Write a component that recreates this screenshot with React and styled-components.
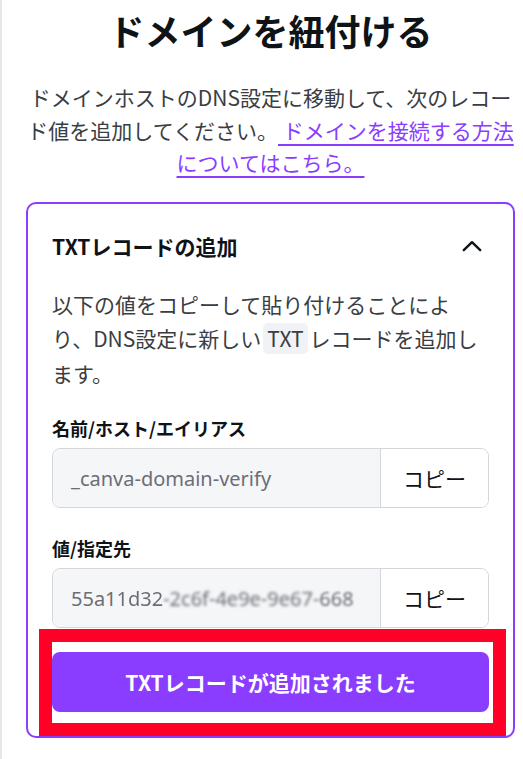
import React from 'react';
import styled, { createGlobalStyle } from 'styled-components';

const GlobalStyle = createGlobalStyle`
  html, body {
    margin: 0;
    padding: 0;
    background: #ffffff;
  }
  body {
    font-family: "Noto Sans CJK JP", "Noto Sans", sans-serif;
    color: #0e1318;
  }
`;

const Page = styled.div`
  min-height: 100vh;
  border-left: 2px solid #e6e6ec;
  box-sizing: border-box;
  padding: 5px 8px 0 24px;
`;

const Column = styled.div`
  width: 489px;
  display: flex;
  flex-direction: column;
  align-items: stretch;
`;

const Title = styled.h1`
  margin: 0;
  font-size: 36px;
  line-height: 50px;
  font-weight: 700;
  text-align: center;
  color: #0e1318;
`;

const Intro = styled.p`
  margin: 26px 0 0;
  font-size: 21px;
  line-height: 32.5px;
  text-align: center;
  color: #3a3d42;
`;

const Link = styled.a`
  color: #8b3dff;
  text-decoration: underline;
  text-underline-offset: 5px;
  text-decoration-thickness: 2px;
`;

const Card = styled.section`
  margin-top: 23px;
  border: 2px solid #8b3dff;
  border-radius: 10px;
  padding: 24px;
  display: flex;
  flex-direction: column;
`;

const CardHeader = styled.div`
  height: 36px;
  display: flex;
  align-items: center;
  justify-content: space-between;
`;

const CardTitle = styled.h2`
  margin: 0;
  font-size: 21px;
  font-weight: 700;
  color: #0e1318;
`;

const Toggle = styled.button`
  width: 36px;
  height: 36px;
  margin-right: -1px;
  padding: 0;
  border: none;
  background: transparent;
  display: flex;
  align-items: center;
  justify-content: center;
  color: #0e1318;
`;

const Desc = styled.p`
  margin: 23px 0 0;
  font-size: 21px;
  line-height: 34.5px;
  color: #3a3d42;
`;

const Code = styled.code`
  display: inline-block;
  font-family: "Noto Sans CJK JP", "Noto Sans", sans-serif;
  line-height: 31px;
  background: #f1f2f5;
  border-radius: 5px;
  padding: 0 4px;
  margin: 0 2px;
`;

const Field = styled.div`
  margin-top: ${(p) => p.$gap}px;
  display: flex;
  flex-direction: column;
`;

const Label = styled.label`
  font-size: 18px;
  line-height: 28px;
  font-weight: 700;
  color: #0e1318;
  margin-bottom: 6px;
`;

const InputGroup = styled.div`
  height: 60px;
  display: flex;
  border: 1px solid #d5d6dc;
  border-radius: 8px;
  overflow: hidden;
  box-sizing: border-box;
`;

const Value = styled.div`
  flex: 1;
  min-width: 0;
  background: #f5f6f8;
  padding: 0 18px;
  display: flex;
  align-items: center;
  font-family: "Noto Sans", sans-serif;
  font-size: 20px;
  color: #6c6e76;
  white-space: nowrap;
  overflow: hidden;
`;

const Blur = styled.span`
  display: inline-block;
  filter: blur(${(p) => p.$r}px);
`;

const CopyButton = styled.button`
  width: 108px;
  flex: none;
  border: none;
  border-left: 1px solid #d5d6dc;
  background: #ffffff;
  font-family: "Noto Sans CJK JP", sans-serif;
  font-size: 21px;
  color: #0e1318;
  padding: 0;
`;

const ActionWrap = styled.div`
  position: relative;
  margin-top: 24px;
`;

const Primary = styled.button`
  width: 100%;
  height: 60px;
  border: none;
  border-radius: 8px;
  background: #8b3dff;
  color: #ffffff;
  font-family: "Noto Sans CJK JP", sans-serif;
  font-size: 21px;
  font-weight: 700;
`;

const Highlight = styled.div`
  position: absolute;
  left: -13px;
  top: -23px;
  right: -17px;
  bottom: -24px;
  border: 13px solid #ff0026;
  pointer-events: none;
`;

function ChevronUp() {
  return (
    <svg width="20" height="12" viewBox="0 0 20 12" fill="none">
      <path d="M1.8 10.2 L10 2.2 L18.2 10.2" stroke="currentColor" strokeWidth="2.4" strokeLinecap="round" strokeLinejoin="round" />
    </svg>
  );
}

export default function App() {
  return (
    <>
      <GlobalStyle />
      <Page>
        <Column>
          <Title>ドメインを紐付ける</Title>
          <Intro>
            ドメインホストのDNS設定に移動して、次のレコード値を追加してください。
            <Link href="#"> ドメインを接続する方法についてはこちら。 </Link>
          </Intro>

          <Card>
            <CardHeader>
              <CardTitle>TXTレコードの追加</CardTitle>
              <Toggle aria-label="閉じる"><ChevronUp /></Toggle>
            </CardHeader>
            <Desc>
              以下の値をコピーして貼り付けることにより、DNS設定に新しい<Code>TXT</Code>レコードを追加します。
            </Desc>

            <Field $gap={24}>
              <Label>名前/ホスト/エイリアス</Label>
              <InputGroup>
                <Value>_canva-domain-verify</Value>
                <CopyButton>コピー</CopyButton>
              </InputGroup>
            </Field>

            <Field $gap={26}>
              <Label>値/指定先</Label>
              <InputGroup>
                <Value>
                  55a1
                  <Blur $r={0.6}>1d32</Blur>
                  <Blur $r={1.8}>-2c6f-4e9e-9e67-</Blur>
                  <Blur $r={0.9}>668</Blur>
                </Value>
                <CopyButton>コピー</CopyButton>
              </InputGroup>
            </Field>

            <ActionWrap>
              <Primary>TXTレコードが追加されました</Primary>
              <Highlight />
            </ActionWrap>
          </Card>
        </Column>
      </Page>
    </>
  );
}
